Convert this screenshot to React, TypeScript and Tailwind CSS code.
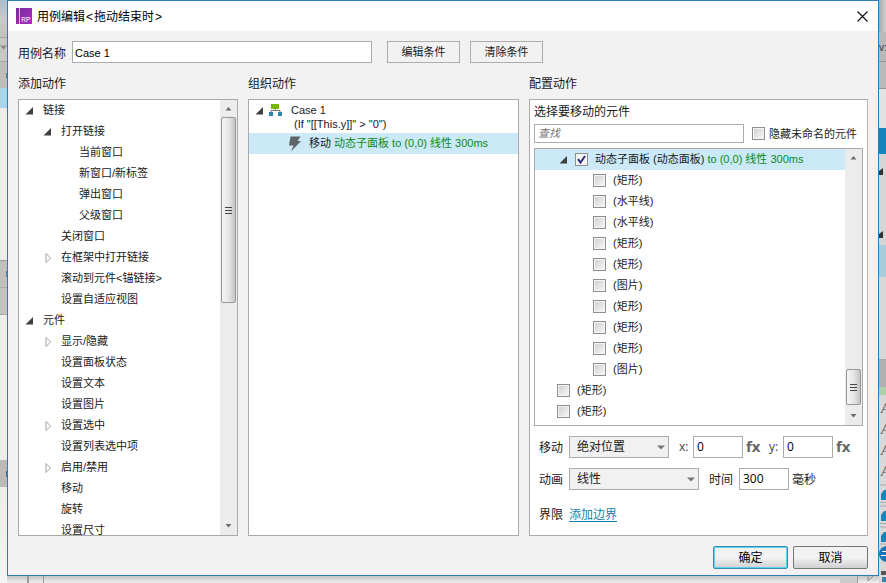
import { ReactNode } from "react";

interface TreeItem {
    label: string;
    level: number;
    state?: "open" | "closed";
}

const actions: TreeItem[] = [
    { label: "链接", level: 0, state: "open" },
    { label: "打开链接", level: 1, state: "open" },
    { label: "当前窗口", level: 2 },
    { label: "新窗口/新标签", level: 2 },
    { label: "弹出窗口", level: 2 },
    { label: "父级窗口", level: 2 },
    { label: "关闭窗口", level: 1 },
    { label: "在框架中打开链接", level: 1, state: "closed" },
    { label: "滚动到元件<锚链接>", level: 1 },
    { label: "设置自适应视图", level: 1 },
    { label: "元件", level: 0, state: "open" },
    { label: "显示/隐藏", level: 1, state: "closed" },
    { label: "设置面板状态", level: 1 },
    { label: "设置文本", level: 1 },
    { label: "设置图片", level: 1 },
    { label: "设置选中", level: 1, state: "closed" },
    { label: "设置列表选中项", level: 1 },
    { label: "启用/禁用", level: 1, state: "closed" },
    { label: "移动", level: 1 },
    { label: "旋转", level: 1 },
    { label: "设置尺寸", level: 1 },
];

const widgets = ["(矩形)", "(水平线)", "(水平线)", "(矩形)", "(矩形)", "(图片)", "(矩形)", "(矩形)", "(矩形)", "(图片)"];

const indent = ["pl-[5px]", "pl-[23px]", "pl-[41px]"];

function Arrow({ state }: { state?: "open" | "closed" }) {
    return (
        <svg className="h-[10px] w-[10px] shrink-0" viewBox="0 0 10 10">
            {state === "open" && <path d="M9 1V8.5H1.5Z" fill="#404040" />}
            {state === "closed" && <path d="M4 0.5L8.5 5L4 9.5Z" fill="#fff" stroke="#a0a0a0" />}
        </svg>
    );
}

function Checkbox({ checked }: { checked?: boolean }) {
    return (
        <span className="flex h-[13px] w-[13px] shrink-0 items-center justify-center border border-[#8e8f8f] bg-[#f4f4f4] p-px">
            {checked ? (
                <svg className="h-[9px] w-[9px]" viewBox="0 0 9 9" fill="none">
                    <path d="M1 4.2L3.5 7.5L8 1" stroke="#2a2f7c" strokeWidth="2" />
                </svg>
            ) : (
                <span className="h-full w-full bg-linear-to-br from-[#cfd1d3] to-[#f6f6f6]" />
            )}
        </span>
    );
}

function ScrollArrow({ up }: { up?: boolean }) {
    return (
        <svg className="h-[17px] w-[17px] shrink-0" viewBox="0 0 17 17">
            <path d={up ? "M5.5 10.5H11.5L8.5 7Z" : "M5.5 6H11.5L8.5 9.5Z"} fill="#6b6b6b" />
        </svg>
    );
}

function Thumb({ height }: { height: string }) {
    return (
        <div className={`mx-px flex w-[15px] shrink-0 flex-col items-center justify-center gap-[2px] rounded-[2px] border border-[#979797] bg-linear-to-r from-[#f5f5f5] via-[#e6e6e7] to-[#c4c4c7] ${height}`}>
            <span className="h-px w-[7px] bg-[#444]" />
            <span className="h-px w-[7px] bg-[#444]" />
            <span className="h-px w-[7px] bg-[#444]" />
        </div>
    );
}

function Select({ label, width }: { label: string; width: string }) {
    return (
        <div className={`flex h-[22px] items-center justify-between border border-[#acacac] bg-[#f1f1f1] pr-[3px] pl-[7px] ${width}`}>
            <span>{label}</span>
            <svg className="h-[5px] w-[8px]" viewBox="0 0 8 5">
                <path d="M0 0.5H8L4 4.5Z" fill="#777" />
            </svg>
        </div>
    );
}

function Field({ value }: { value: string }) {
    return (
        <div className="flex h-[22px] w-[50px] items-center border border-[#ababab] bg-white pl-[3px] font-['Open_Sans','Noto_Sans_CJK_SC',sans-serif] text-black">
            <span className="-mt-px">{value}</span>
        </div>
    );
}

function Fx() {
    return <span className="block pb-[2px] font-['Open_Sans',sans-serif] text-[15px] leading-[16px] font-bold text-[#666]">fx</span>;
}

function FlatButton({ children }: { children: ReactNode }) {
    return <button className="h-[22px] w-[73px] border border-[#adadad] bg-[#f2f2f2] text-[11px] leading-[20px]">{children}</button>;
}

// slices of the main window still visible beside the dialog
function LeftEdge() {
    return (
        <div className="flex w-[7px] shrink-0 flex-col overflow-hidden">
            <div className="h-[37px] bg-linear-to-b from-[#a9bdcb] via-[#c9c9c9] to-[#c5c0bd]" />
            <div className="flex h-[25px] items-start border-y border-[#a5a5a5] bg-[#cac6c3] pt-[7px]">
                <svg className="h-[5px] w-[7px]" viewBox="0 0 7 5">
                    <path d="M0 0.5H7L3.5 4.5Z" fill="#8a8a8a" />
                </svg>
            </div>
            <div className="flex h-[26px] items-center justify-end bg-[#bfbcba]">
                <span className="h-[5px] w-px bg-[#607585]" />
            </div>
            <div className="h-[20px] bg-[#a8d6ea]" />
            <div className="h-[152px] bg-[#efebe8]" />
            <div className="flex h-[27px] items-center justify-end border-t border-[#999] bg-[#c3bfbd]">
                <span className="h-[6px] w-px bg-[#557e9e]" />
            </div>
            <div className="h-[28px] border-y border-[#aaa] bg-[#c5c1be]" />
            <div className="h-[145px] bg-[#f0ece9]" />
            <div className="flex h-[27px] items-center justify-end bg-[#bdb9b7]">
                <span className="h-[6px] w-px bg-[#3f6f94]" />
            </div>
            <div className="grow bg-linear-to-b from-[#efebe8] to-[#f4f4f4]" />
        </div>
    );
}

function RightEdge() {
    return (
        <div className="flex w-[7px] shrink-0 flex-col overflow-hidden bg-[#d8d8d8]">
            <div className="h-[32px] bg-linear-to-r from-[#a9a9a9] to-[#d0d0d0]" />
            <div className="h-[30px] border-b border-[#969696] bg-[#b9b9b9] text-[10px] leading-[32px] whitespace-nowrap text-[#333]">v:</div>
            <div className="h-[27px] border-b border-[#969696] bg-[#bababa]" />
            <div className="h-[39px] bg-[#e2e2e2]" />
            <div className="h-[26px] bg-[#1785bd]" />
            <div className="h-[91px] bg-[#d5d5d5]">
                <svg className="h-[91px] w-[7px]" viewBox="0 0 7 91">
                    <path d="M4 14V21H0V17Z" fill="#333" />
                    <path d="M4 77V84H0V80Z" fill="#333" />
                </svg>
            </div>
            <div className="h-[32px] bg-[#a9ccda]" />
            <div className="h-[83px] border-b border-[#aaa] bg-[#d8d8d8]" />
            <div className="h-[27px] bg-[#b1b1b1]" />
            <div className="h-[8px] bg-[#afcfab]" />
            <div className="flex h-[88px] flex-col pt-[3px] pl-[2px] font-['Liberation_Serif',serif] text-[14px] leading-[21px] text-[#555] italic">
                <span>A</span>
                <span>A</span>
                <span>A</span>
                <span>A</span>
            </div>
            <svg className="h-[100px] w-[7px] shrink-0" viewBox="0 0 7 100">
                <path d="M1 2H7M1 19.5H7M1 23H7M1 40.5H7M1 44H7M1 61H7" stroke="#aaa" />
                <path d="M2 17V11L5 7H7V17ZM2 38V32L5 28H7V38ZM2 59V53L5 49H7V59Z" fill="#1685bb" />
                <circle cx="8" cy="71" r="8" fill="#1e75b5" />
                <path d="M3 68.5H7M2 72.5H7" stroke="#fff" />
                <path d="M2 88H7V92H2Z" fill="#555" />
                <path d="M3 94H7V99H3Z" fill="#3a82ac" />
            </svg>
        </div>
    );
}

function ActionTree() {
    return (
        <div className="flex h-[437px] w-[220px] border border-[#a9a9a9] bg-white text-[11px]">
            <div className="grow overflow-hidden">
                {actions.map((item, i) => (
                    <div key={i} className={`flex h-[21px] items-center gap-[9px] whitespace-nowrap ${indent[item.level]}`}>
                        <Arrow state={item.state} />
                        <span>{item.label}</span>
                    </div>
                ))}
            </div>
            <div className="flex w-[17px] flex-col bg-[#ececec]">
                <ScrollArrow up />
                <Thumb height="h-[186px]" />
                <div className="grow" />
                <ScrollArrow />
            </div>
        </div>
    );
}

function CaseTree() {
    return (
        <div className="h-[437px] w-[271px] border border-[#a9a9a9] bg-white text-[11px]">
            <div className="flex h-[33px] pt-[3px] pl-[5px] leading-[14px]">
                <div className="pt-[3px]">
                    <Arrow state="open" />
                </div>
                <svg className="mt-px ml-[5px] h-[12px] w-[13px]" viewBox="0 0 13 12">
                    <path d="M6.5 4V7M2 9V6.5H11V9" stroke="#777" fill="none" />
                    <path d="M2 0H10V5H2Z" fill="#76b900" />
                    <path d="M0 8H4V12H0ZM9 8H13V12H9Z" fill="#2a86b5" />
                </svg>
                <div className="pl-[9px]">
                    <div>Case 1</div>
                    <div className="pl-[3px]">(If "[[This.y]]" &gt; "0")</div>
                </div>
            </div>
            <div className="flex h-[21px] items-center bg-[#cbe9f6] pl-[39px]">
                <svg className="h-[16px] w-[14px]" viewBox="0 0 14 16">
                    <path d="M2.5 0.5H12.5L9.5 5H13L3 15.5L5.5 9.5H1Z" fill="#5f6468" />
                </svg>
                <span className="pl-[7px]">移动 <span className="text-[#0b8a20]">动态子面板 to (0,0) 线性 300ms</span></span>
            </div>
        </div>
    );
}

function ConfigPanel() {
    return (
        <div className="h-[437px] w-[339px] border border-[#a9a9a9] border-r-[#c3b2a5] bg-white pl-[4px]">
            <div className="h-[24px] leading-[25px]">选择要移动的元件</div>
            <div className="flex h-[19px] items-center">
                <div className="h-[19px] w-[210px] border border-[#ababab] pl-[3px] text-[11px] leading-[17px] text-[#777] italic">查找</div>
                <div className="flex items-center gap-[4px] pl-[8px] text-[11px]">
                    <Checkbox />
                    <span className="pt-[2px]">隐藏未命名的元件</span>
                </div>
            </div>
            <div className="mt-[5px] flex h-[278px] w-[329px] border border-[#a9a9a9] text-[11px]">
                <div className="grow overflow-hidden">
                    <div className="flex h-[21px] items-center bg-[#cbe9f6] pl-[23px]">
                        <Arrow state="open" />
                        <span className="w-[7px]" />
                        <Checkbox checked />
                        <span className="pl-[7px]">动态子面板 (动态面板) <span className="text-[#0b8a20]">to (0,0) 线性 300ms</span></span>
                    </div>
                    {widgets.map((name, i) => (
                        <div key={i} className="flex h-[21px] items-center gap-[7px] pl-[58px]">
                            <Checkbox />
                            <span>{name}</span>
                        </div>
                    ))}
                    <div className="flex h-[21px] items-center gap-[7px] pl-[22px]">
                        <Checkbox />
                        <span>(矩形)</span>
                    </div>
                    <div className="flex h-[21px] items-center gap-[7px] pl-[22px]">
                        <Checkbox />
                        <span>(矩形)</span>
                    </div>
                </div>
                <div className="flex w-[17px] flex-col bg-[#ececec]">
                    <ScrollArrow up />
                    <div className="grow" />
                    <Thumb height="h-[36px]" />
                    <div className="h-[3px]" />
                    <ScrollArrow />
                </div>
            </div>
            <div className="mt-[10px] flex h-[22px] items-center pl-[5px]">
                <span className="w-[30px] pt-[2px]">移动</span>
                <Select label="绝对位置" width="w-[100px]" />
                <span className="w-[24px] pl-[10px] font-['Open_Sans',sans-serif] text-[#444]">x:</span>
                <Field value="0" />
                <span className="w-[26px] pl-[3px]"><Fx /></span>
                <span className="w-[14px] font-['Open_Sans',sans-serif] text-[#444]">y:</span>
                <Field value="0" />
                <span className="pl-[3px]"><Fx /></span>
            </div>
            <div className="mt-[10px] flex h-[22px] items-center pl-[5px]">
                <span className="w-[30px] pt-[2px]">动画</span>
                <Select label="线性" width="w-[130px]" />
                <span className="w-[40px] pt-[2px] pl-[10px]">时间</span>
                <Field value="300" />
                <span className="pt-[2px] pl-[3px]">毫秒</span>
            </div>
            <div className="mt-[14px] flex h-[22px] items-center pl-[5px]">
                <span className="w-[30px]">界限</span>
                <a className="text-[#1482ab] underline underline-offset-2">添加边界</a>
            </div>
        </div>
    );
}

export default function App() {
    return (
        <div className="flex h-[583px] w-[886px] overflow-hidden bg-[#e9e9e9] font-['Liberation_Sans','Noto_Sans_CJK_SC',sans-serif] text-[12px] text-[#1a1a1a]">
            <LeftEdge />
            <div className="flex w-[872px] shrink-0 flex-col">
                <div className="h-[576px] border border-[#2a7db5] bg-[#f2f2f2]">
                    <div className="flex h-[30px] items-center bg-white pr-[10px] pl-[8px] text-black">
                        <div className="flex h-[16px] w-[16px] items-end bg-linear-to-br from-[#7a2a9c] to-[#a52fc6]">
                            <span className="ml-[3px] h-full w-px shrink-0 bg-[#dcb5e8]" />
                            <span className="pl-px font-['Open_Sans',sans-serif] text-[8px] leading-[11px] tracking-tight text-white">RP</span>
                        </div>
                        <span className="grow pt-px pl-[5px]">
                            用例编辑<span className="inline-block w-[9px] text-center">&lt;</span>拖动结束时<span className="inline-block w-[9px] text-center">&gt;</span>
                        </span>
                        <svg className="h-[11px] w-[11px]" viewBox="0 0 11 11">
                            <path d="M0.5 0.5L10.5 10.5M10.5 0.5L0.5 10.5" stroke="#111" strokeWidth="1.1" />
                        </svg>
                    </div>
                    <div className="mt-[10px] flex h-[22px] items-center pl-[10px]">
                        <span className="w-[54px] pt-[3px]">用例名称</span>
                        <div className="h-[22px] w-[300px] border border-[#ababab] bg-white pl-[2px] text-[11px] leading-[22px] text-black">Case 1</div>
                        <div className="flex gap-[10px] pl-[15px]">
                            <FlatButton>编辑条件</FlatButton>
                            <FlatButton>清除条件</FlatButton>
                        </div>
                    </div>
                    <div className="flex gap-[10px] pt-[10px] pl-[10px]">
                        <div>
                            <div className="h-[26px] leading-[23px]">添加动作</div>
                            <ActionTree />
                        </div>
                        <div>
                            <div className="h-[26px] leading-[23px]">组织动作</div>
                            <CaseTree />
                        </div>
                        <div>
                            <div className="h-[26px] leading-[23px]">配置动作</div>
                            <ConfigPanel />
                        </div>
                    </div>
                    <div className="flex justify-end gap-[5px] pt-[10px] pr-[10px]">
                        <button className="h-[23px] w-[75px] rounded-[2px] border border-[#3c8aae] bg-linear-to-b from-[#f2f2f2] from-50% to-[#d2d2d2] pt-px leading-[20px] text-black shadow-[inset_0_0_0_1px_#5fd0f2]">确定</button>
                        <button className="h-[23px] w-[75px] rounded-[2px] border border-[#777] bg-linear-to-b from-[#f2f2f2] from-50% to-[#d0d0d0] pt-px leading-[20px] text-black">取消</button>
                    </div>
                </div>
                <div className="flex h-[7px] bg-linear-to-b from-[#c4c4c4] to-[#efefef]">
                    <span className="ml-[20px] w-[2px] bg-[#999]" />
                    <span className="ml-[14px] w-px bg-[#999]" />
                    <span className="ml-[796px] w-[17px] bg-[#ccc]" />
                    <span className="w-px bg-[#999]" />
                    <svg className="ml-[9px] h-[7px] w-[8px]" viewBox="0 0 8 7">
                        <path d="M1 0V5L6 0" stroke="#888" fill="none" />
                    </svg>
                </div>
            </div>
            <RightEdge />
        </div>
    );
}
